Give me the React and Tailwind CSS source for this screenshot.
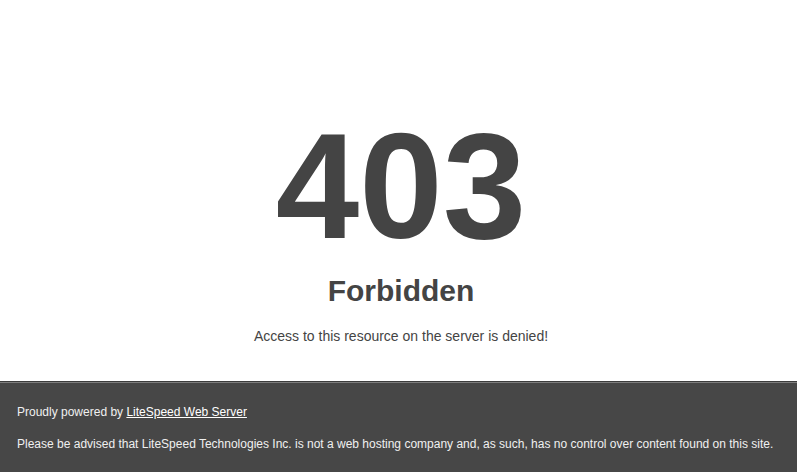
export default function App() {
  return (
    <div className="flex h-screen flex-col bg-white text-[14px] leading-[20px] text-[#444] font-['Liberation_Sans',Arial,Helvetica,sans-serif]">
      {/* 错误信息 */}
      <div className="flex-1 pt-[111px] pl-[5px] text-center">
        <h1 className="m-0 text-[150px] leading-[150px] font-bold">403</h1>
        <h2 className="mt-[20px] mb-[25px] text-[30px] leading-[20px] font-bold">Forbidden</h2>
        <p>Access to this resource on the server is denied!</p>
      </div>

      {/* 页脚 */}
      <div className="h-[91px] border-t border-black/15 bg-[#474747] px-[17px] pt-[20px] text-[12px] leading-[20px] text-[#f0f0f0] shadow-[inset_0_1px_0_rgba(255,255,255,0.3)]">
        <div>
          Proudly powered by{" "}
          <a href="#" className="text-white underline">
            LiteSpeed Web Server
          </a>
        </div>
        <p className="mt-[12px]">
          Please be advised that LiteSpeed Technologies Inc. is not a web hosting company and, as such, has no control over content found on this site.
        </p>
      </div>
    </div>
  );
}
